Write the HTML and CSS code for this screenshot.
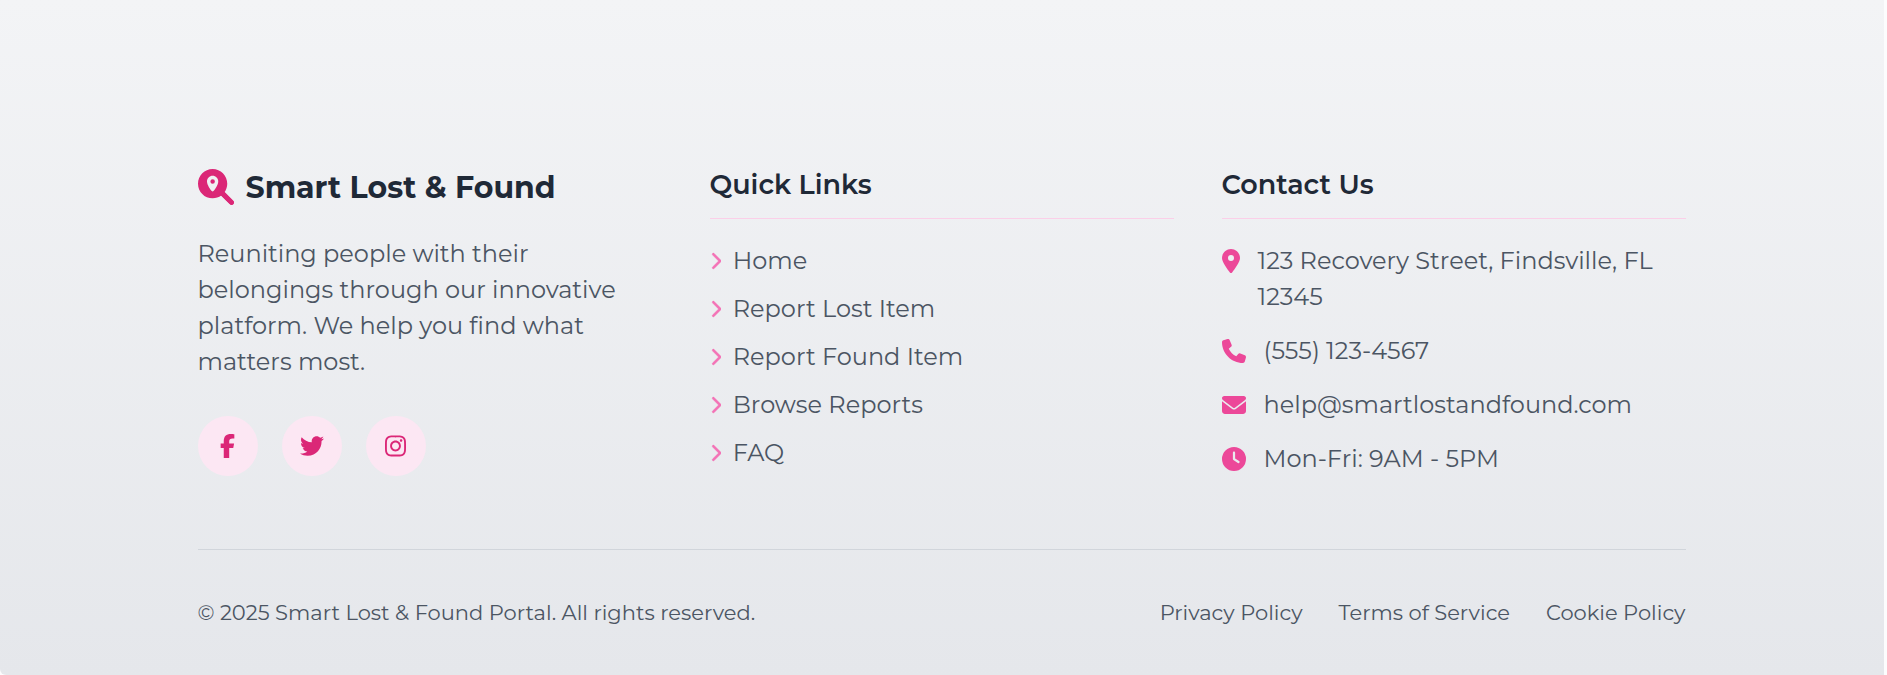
FILE: index.html
```html
<!DOCTYPE html>
<html lang="en">
<head>
<meta charset="utf-8">
<title>Smart Lost &amp; Found</title>
<link rel="stylesheet" href="styles.css">
</head>
<body>
<svg class="sprite" aria-hidden="true">
  <symbol id="chevron" viewBox="0 0 320 512"><path d="M310.6 233.4c12.5 12.5 12.5 32.8 0 45.3l-192 192c-12.5 12.5-32.8 12.5-45.3 0s-12.5-32.8 0-45.3L242.7 256 73.4 86.6c-12.5-12.5-12.5-32.8 0-45.3s32.8-12.5 45.3 0l192 192z"/></symbol>
</svg>
<footer class="footer">
  <div class="container">
    <div class="columns">
      <section>
        <div class="brand">
          <svg class="brand-icon" viewBox="0 0 512 512"><path fill-rule="evenodd" d="M416 208c0 45.9-14.9 88.3-40 122.7L502.6 457.4c12.5 12.5 12.5 32.8 0 45.3s-32.8 12.5-45.3 0L330.7 376c-34.4 25.2-76.8 40-122.7 40C93.1 416 0 322.9 0 208S93.1 0 208 0S416 93.1 416 208zM288 176c0-44.2-35.8-80-80-80s-80 35.8-80 80c0 48.8 46.5 111.6 68.6 138.6c6 7.3 16.8 7.3 22.7 0c22.1-27 68.6-89.8 68.6-138.6zm-112 0a32 32 0 1 1 64 0 32 32 0 1 1-64 0z"/><path class="handle" d="M340 340L474 474"/></svg>
          <span class="brand-name">Smart Lost &amp; Found</span>
        </div>
        <p class="about">Reuniting people with their belongings through our innovative platform. We help you find what matters most.</p>
        <div class="social">
          <a class="social-link"><svg width="15" height="24" viewBox="0 0 320 512"><path d="M80 299.3V512H196V299.3h86.5l18-97.8H196V166.9c0-51.7 20.3-71.5 72.7-71.5c16.3 0 29.4 .4 37 1.2V7.9C291.4 4 256.4 0 236.2 0C129.3 0 80 50.5 80 159.4v42.1H14v97.8H80z"/></svg></a>
          <a class="social-link"><svg width="24" height="24" viewBox="0 0 512 512"><path d="M459.37 151.716c.325 4.548.325 9.097.325 13.645 0 138.72-105.583 298.558-298.558 298.558-59.452 0-114.68-17.219-161.137-47.106 8.447.974 16.568 1.299 25.34 1.299 49.055 0 94.213-16.568 130.274-44.832-46.132-.975-84.792-31.188-98.112-72.772 6.498.974 12.995 1.624 19.818 1.624 9.421 0 18.843-1.3 27.614-3.573-48.081-9.747-84.143-51.98-84.143-102.985v-1.299c13.969 7.797 30.214 12.67 47.431 13.319-28.264-18.843-46.781-51.005-46.781-87.391 0-19.492 5.197-37.36 14.294-52.954 51.655 63.675 129.3 105.258 216.365 109.807-1.624-7.797-2.599-15.918-2.599-24.04 0-57.828 46.782-104.934 104.934-104.934 30.213 0 57.502 12.67 76.67 33.137 23.715-4.548 46.456-13.32 66.599-25.34-7.798 24.366-24.366 44.833-46.132 57.827 21.117-2.273 41.584-8.122 60.426-16.243-14.292 20.791-32.161 39.308-52.628 54.253z"/></svg></a>
          <a class="social-link"><svg width="21" height="24" viewBox="0 0 448 512"><path d="M224.1 141c-63.6 0-114.9 51.3-114.9 114.9s51.3 114.9 114.9 114.9S339 319.5 339 255.9 287.7 141 224.1 141zm0 189.6c-41.1 0-74.7-33.5-74.7-74.7s33.5-74.7 74.7-74.7 74.7 33.5 74.7 74.7-33.6 74.7-74.7 74.7zm146.4-194.3c0 14.9-12 26.8-26.8 26.8-14.9 0-26.8-12-26.8-26.8s12-26.8 26.8-26.8 26.8 12 26.8 26.8zm76.1 27.2c-1.7-35.9-9.9-67.7-36.2-93.9-26.2-26.2-58-34.4-93.9-36.2-37-2.1-147.9-2.1-184.9 0-35.8 1.7-67.6 9.9-93.9 36.1s-34.4 58-36.2 93.9c-2.1 37-2.1 147.9 0 184.9 1.7 35.9 9.9 67.7 36.2 93.9s58 34.4 93.9 36.2c37 2.1 147.9 2.1 184.9 0 35.9-1.7 67.7-9.9 93.9-36.2 26.2-26.2 34.4-58 36.2-93.9 2.1-37 2.1-147.8 0-184.8zM398.8 388c-7.8 19.6-22.9 34.7-42.6 42.6-29.5 11.7-99.5 9-132.1 9s-102.7 2.6-132.1-9c-19.6-7.8-34.7-22.9-42.6-42.6-11.7-29.5-9-99.5-9-132.1s-2.6-102.7 9-132.1c7.8-19.6 22.9-34.7 42.6-42.6 29.5-11.7 99.5-9 132.1-9s102.7-2.6 132.1 9c19.6 7.8 34.7 22.9 42.6 42.6 11.7 29.5 9 99.5 9 132.1s2.7 102.7-9 132.1z"/></svg></a>
        </div>
      </section>
      <section>
        <h3 class="heading">Quick Links</h3>
        <ul class="links">
          <li><svg class="chevron"><use href="#chevron"/></svg>Home</li>
          <li><svg class="chevron"><use href="#chevron"/></svg>Report Lost Item</li>
          <li><svg class="chevron"><use href="#chevron"/></svg>Report Found Item</li>
          <li><svg class="chevron"><use href="#chevron"/></svg>Browse Reports</li>
          <li><svg class="chevron"><use href="#chevron"/></svg>FAQ</li>
        </ul>
      </section>
      <section>
        <h3 class="heading">Contact Us</h3>
        <ul class="contact">
          <li class="address"><svg width="18" height="24" viewBox="0 0 384 512"><path d="M215.7 499.2C267 435 384 279.4 384 192C384 86 298 0 192 0S0 86 0 192c0 87.4 117 243 168.3 307.2c12.3 15.3 35.1 15.3 47.4 0zM192 128a64 64 0 1 1 0 128 64 64 0 1 1 0-128z"/></svg><span>123 Recovery Street, Findsville, FL 12345</span></li>
          <li><svg width="24" height="24" viewBox="0 0 512 512"><path d="M164.9 24.6c-7.7-18.6-28-28.5-47.4-23.2l-88 24C12.1 30.2 0 46 0 64C0 311.4 200.6 512 448 512c18 0 33.8-12.1 38.6-29.5l24-88c5.3-19.4-4.6-39.7-23.2-47.4l-96-40c-16.3-6.8-35.2-2.1-46.3 11.6L304.7 368C234.3 334.7 177.3 277.7 144 207.3L193.3 167c13.7-11.2 18.4-30 11.6-46.3l-40-96z"/></svg><span>(555) 123-4567</span></li>
          <li><svg width="24" height="24" viewBox="0 0 512 512"><path d="M48 64C21.5 64 0 85.5 0 112c0 15.1 7.1 29.3 19.2 38.4L236.8 313.6c11.4 8.5 27 8.5 38.4 0L492.8 150.4c12.1-9.1 19.2-23.3 19.2-38.4c0-26.5-21.5-48-48-48H48zM0 176V384c0 35.3 28.7 64 64 64H448c35.3 0 64-28.7 64-64V176L294.4 339.2c-22.8 17.1-54 17.1-76.8 0L0 176z"/></svg><span>help@smartlostandfound.com</span></li>
          <li><svg width="24" height="24" viewBox="0 0 512 512"><path d="M256 0a256 256 0 1 1 0 512A256 256 0 1 1 256 0zM232 120V256c0 8 4 15.5 10.7 20l96 64c11 7.4 25.9 4.4 33.3-6.7s4.4-25.9-6.7-33.3L280 243.2V120c0-13.3-10.7-24-24-24s-24 10.7-24 24z"/></svg><span>Mon-Fri: 9AM - 5PM</span></li>
        </ul>
      </section>
    </div>
    <div class="bottom">
      <span>© 2025 Smart Lost &amp; Found Portal. All rights reserved.</span>
      <nav class="legal"><a>Privacy Policy</a><a>Terms of Service</a><a>Cookie Policy</a></nav>
    </div>
  </div>
</footer>
</body>
</html>
```
FILE: styles.css
```css
* { box-sizing: border-box; margin: 0; padding: 0; }
body { background: #fcfcfd; font-family: Montserrat, Inter, sans-serif; font-size: 24px; font-weight: 400; line-height: 36px; color: #4b5563; height: 675px; overflow: hidden; }
.sprite { display: none; }
svg { flex: none; fill: currentColor; }
ul { list-style: none; }
.footer { width: 1884px; height: 675px; padding-top: 164px; background: linear-gradient(#f3f4f6, #e5e7eb); border-bottom-left-radius: 6px; }
.container { width: 1488px; margin-left: 197.5px; }
.columns { display: grid; grid-template-columns: repeat(3, 1fr); gap: 48px; height: 313px; }
.brand { display: flex; align-items: center; gap: 12px; height: 48px; margin-bottom: 24px; }
.brand-icon { width: 36px; height: 36px; margin-bottom: 2px; color: #db2777; }
.handle { stroke: currentColor; stroke-width: 72; stroke-linecap: round; }
.brand-name { font-size: 30px; line-height: 48px; font-weight: 700; color: #1f2937; }
.about { margin-bottom: 36px; }
.social { display: flex; gap: 24px; }
.social-link { display: flex; align-items: center; justify-content: center; width: 60px; height: 60px; border-radius: 50%; background: #fce7f3; color: #db2777; }
.heading { height: 55px; margin-bottom: 24px; border-bottom: 1px solid #fbcfe8; font-size: 27px; line-height: 42px; font-weight: 600; color: #1f2937; }
.links { display: grid; gap: 12px; }
.links li { display: flex; align-items: center; gap: 12px; }
.chevron { width: 11.25px; height: 18px; color: #f472b6; stroke: currentColor; stroke-width: 12; }
.contact { display: grid; gap: 18px; }
.contact li { display: flex; align-items: center; gap: 18px; }
.contact svg { color: #ec4899; }
.contact .address { align-items: flex-start; }
.address svg { margin-top: 6px; }
.bottom { display: flex; justify-content: space-between; margin-top: 72px; padding-top: 48px; border-top: 1px solid #d1d5db; font-size: 21px; line-height: 30px; }
.legal { display: flex; gap: 36px; }
```
